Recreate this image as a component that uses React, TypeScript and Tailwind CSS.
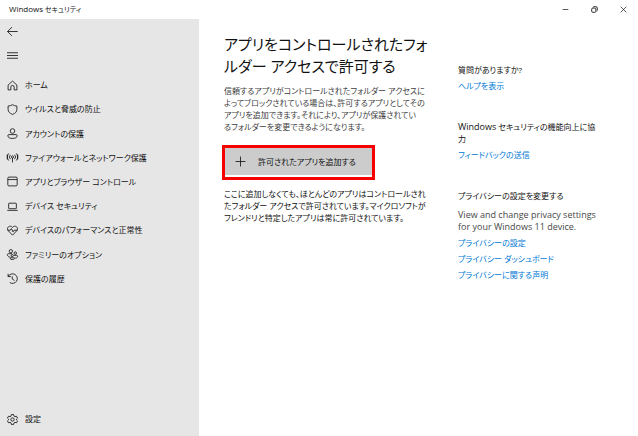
import React from 'react';

const iconPaths: Record<string, React.ReactNode> = {
  back: <path d="M9 2 1 10l8 8M1 10h18.500" />,
  menu: <path d="M0 5h20M0 10h20M0 15h20" />,
  home: <path d="M2 9.200 10 2l8 7.200V18h-5v-5.200a3 3 0 0 0-6 0V18H2z" />,
  shield: <path d="M10 1.200c2.600 1.700 5 2.400 8 2.500v6c0 4.600-3 7.300-8 9.300-5-2-8-4.700-8-9.300v-6c3-.1 5.400-.8 8-2.500z" />,
  account: (
    <>
      <circle cx="10" cy="5.500" r="4.200" />
      <path d="M3.500 12h13A2 2 0 0 1 18.500 14c0 3.200-3.500 5-8.500 5s-8.500-1.800-8.500-5a2 2 0 0 1 2-2z" />
    </>
  ),
  network: (
    <>
      <circle cx="10" cy="9" r="2" />
      <path d="M10 11v8M6.300 13a5.500 5.500 0 0 1 0-8M13.700 13a5.500 5.500 0 0 0 0-8M3.200 15.500a9.500 9.500 0 0 1 0-13M16.800 15.500a9.500 9.500 0 0 0 0-13M.5 13.500v-9M19.500 13.500v-9" />
    </>
  ),
  browser: (
    <>
      <rect x="1.500" y="2" width="17" height="16" rx="2" />
      <path d="M1.500 6.500h17" />
    </>
  ),
  device: (
    <>
      <rect x="3" y="4" width="14" height="10" rx="1" />
      <path d="M.5 17h19" />
    </>
  ),
  health: (
    <>
      <path d="m10 18.500-7.500-7.800C.2 8.300.5 5 2.600 3.300c2.200-1.800 5.200-1.400 7.400 1 2.200-2.400 5.200-2.800 7.400-1 2.100 1.700 2.400 5 .1 7.400z" />
      <path d="M1 9.500h5l2-3 3 6 2-3h6" />
    </>
  ),
  family: (
    <>
      <circle cx="7" cy="4" r="3" />
      <circle cx="15" cy="7.500" r="2.300" />
      <circle cx="9.500" cy="12" r="2" />
      <path d="M9 8.500H2.500C.8 8.500.5 10 1 11.500c.6 2 2.300 3.200 5 3.300M12.500 11.500h5c2 0 2.300 2 1.300 3.500-.7 1-1.800 1.500-3.800 1.600M6 16h7.500c.8 0 .8 3.200-3.800 3.200S5.200 16 6 16z" />
    </>
  ),
  history: (
    <>
      <path d="M2 1.500V6.500h5" />
      <path d="M2.300 6.200A8.700 8.700 0 1 1 5 17.300" />
      <path d="M9.500 6v5l4 2.500" />
    </>
  ),
  settings: (
    <>
      <path d="m8 1-.6 2.700-2 1.100-2.600-.8-2 3.400 2 1.900v1.400l-2 1.900 2 3.400 2.600-.8 2 1.100L8 19h4l.6-2.700 2-1.100 2.600.8 2-3.400-2-1.900V9.300l2-1.900-2-3.400-2.600.8-2-1.100L12 1z" />
      <circle cx="10" cy="10" r="3" />
    </>
  ),
  plus: <path d="M10 1v18M1 10h18" />,
  minimize: <path d="M2 10h16" />,
  restore: (
    <>
      <rect x="2" y="6" width="12" height="12" rx="3" />
      <path d="M6 3.500C6.500 2.500 7 2 8.500 2H14a4 4 0 0 1 4 4v5.500c0 1.500-.5 2-1.500 2.500" />
    </>
  ),
  close: <path d="m2 2 16 16M18 2 2 18" />
};

interface IconProps {
  name: string;
  className?: string;
}

const Icon: React.FC<IconProps> = ({ name, className = 'size-[11px] stroke-[1.5]' }) => (
  <svg
    viewBox="0 0 20 20"
    fill="none"
    stroke="currentColor"
    strokeLinejoin="round"
    aria-hidden="true"
    className={`shrink-0 overflow-visible ${className}`}
  >
    {iconPaths[name]}
  </svg>
);

const navItems = [
  { icon: 'home', label: 'ホーム' },
  { icon: 'shield', label: 'ウイルスと脅威の防止' },
  { icon: 'account', label: 'アカウントの保護' },
  { icon: 'network', label: 'ファイアウォールとネットワーク保護' },
  { icon: 'browser', label: 'アプリとブラウザー コントロール' },
  { icon: 'device', label: 'デバイス セキュリティ' },
  { icon: 'health', label: 'デバイスのパフォーマンスと正常性' },
  { icon: 'family', label: 'ファミリーのオプション' },
  { icon: 'history', label: '保護の履歴' }
];

const NavLink: React.FC<{ icon: string; label: string }> = ({ icon, label }) => (
  <a href="#" className="flex items-center gap-[7px]">
    <Icon name={icon} />
    <span>{label}</span>
  </a>
);

const TitleBar = () => (
  <header className="flex h-[19px] shrink-0 items-center justify-between pr-2.5 pl-[9px] text-[7px]">
    <span>
      <span className="text-[8px]">Windows</span> セキュリティ
    </span>
    <div className="flex gap-5">
      <button type="button" aria-label="最小化" className="p-px">
        <Icon name="minimize" className="size-[7px] stroke-2" />
      </button>
      <button type="button" aria-label="元に戻す" className="p-px">
        <Icon name="restore" className="size-[7px] stroke-[2.5]" />
      </button>
      <button type="button" aria-label="閉じる" className="p-px">
        <Icon name="close" className="size-[7px] stroke-2" />
      </button>
    </div>
  </header>
);

const Sidebar = () => (
  <aside className="flex w-[199px] shrink-0 flex-col bg-[#e6e6e6] pl-[7px]">
    <button type="button" aria-label="戻る" className="flex h-6 items-center">
      <Icon name="back" />
    </button>
    <button type="button" aria-label="ナビゲーションを開く" className="flex h-6 items-center">
      <Icon name="menu" />
    </button>
    <nav className="mt-1.5 grid h-[218px] grid-rows-9">
      {navItems.map((item) => (
        <NavLink key={item.icon} icon={item.icon} label={item.label} />
      ))}
    </nav>
    <div className="mt-auto grid h-[29px] pb-[5px]">
      <NavLink icon="settings" label="設定" />
    </div>
  </aside>
);

const HelpPanel = () => (
  <aside className="w-[180px] shrink-0 pt-[45px]">
    <section>
      <h2>質問がありますか?</h2>
      <a href="#" className="mt-1 block text-[#0078d4]">ヘルプを表示</a>
    </section>
    <section className="mt-[29px]">
      <h2>
        <span className="text-[9px]">Windows</span> セキュリティの機能向上に協
        <br />力
      </h2>
      <a href="#" className="mt-1 block text-[#0078d4]">フィードバックの送信</a>
    </section>
    <section className="mt-[29px]">
      <h2>プライバシーの設定を変更する</h2>
      <p className="mt-[7px] text-[9px] text-[#484848]">
        View and change privacy settings
        <br />
        for your Windows 11 device.
      </p>
      <div className="mt-1 flex flex-col items-start gap-1 text-[#0078d4]">
        <a href="#">プライバシーの設定</a>
        <a href="#">プライバシー ダッシュボード</a>
        <a href="#">プライバシーに関する声明</a>
      </div>
    </section>
  </aside>
);

const App = () => (
  <div className="flex min-h-screen flex-col bg-white font-['Open_Sans','Noto_Sans_CJK_JP',sans-serif] text-[8px] leading-3 whitespace-nowrap text-[#111111] [font-feature-settings:'palt']">
    <TitleBar />
    <div className="flex flex-1">
      <Sidebar />
      <main className="flex-1 pt-3.5 pl-[25px]">
        <h1 className="text-[15px] leading-[22px]">
          アプリをコントロールされたフォ
          <br />
          ルダー アクセスで許可する
        </h1>
        <p className="mt-2 text-[#404040]">
          信頼するアプリがコントロールされたフォルダー アクセスに
          <br />
          よってブロックされている場合は、許可するアプリとしてその
          <br />
          アプリを追加できます。それにより、アプリが保護されてい
          <br />
          るフォルダーを変更できるようになります。
        </p>
        <div className="mt-3 -ml-0.5 w-[153px] border-3 border-[#f60000] pb-0.5">
          <button type="button" className="flex h-[27px] w-full items-center gap-3 bg-[#cccccc] pl-2.5">
            <Icon name="plus" />
            <span>許可されたアプリを追加する</span>
          </button>
        </div>
        <p className="mt-2">
          ここに追加しなくても、ほとんどのアプリはコントロールされ
          <br />
          たフォルダー アクセスで許可されています。マイクロソフトが
          <br />
          フレンドリと特定したアプリは常に許可されています。
        </p>
      </main>
      <HelpPanel />
    </div>
  </div>
);

export default App;
